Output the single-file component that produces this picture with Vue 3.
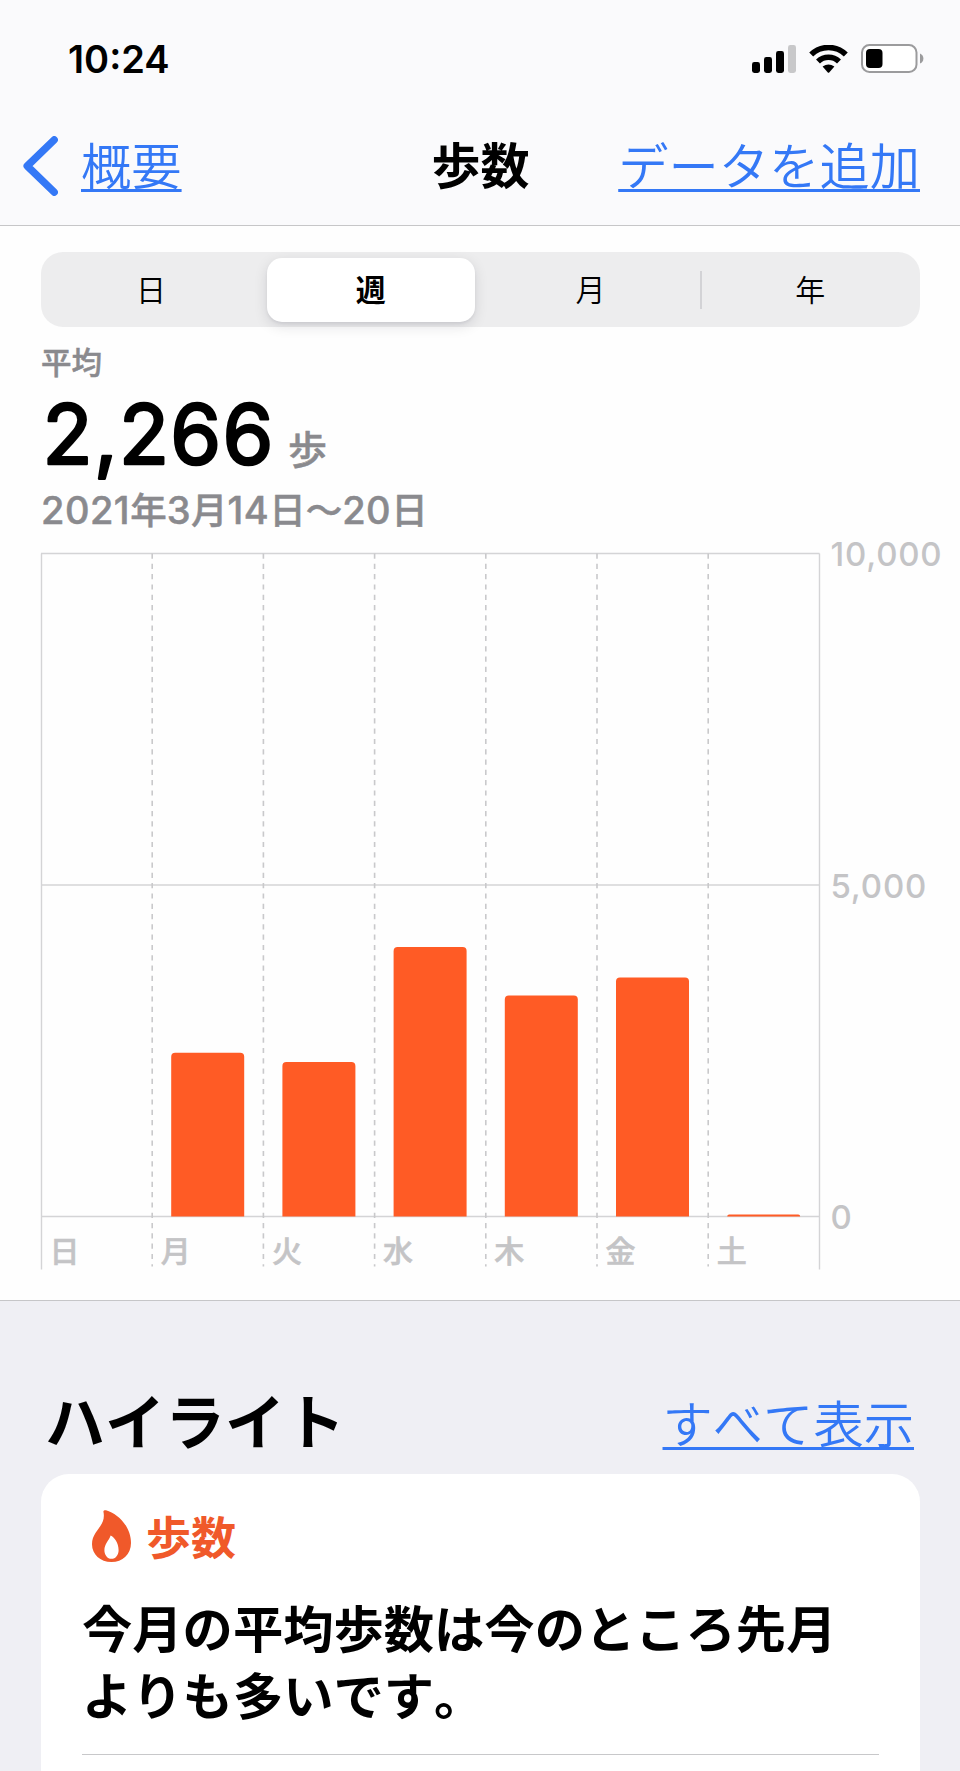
<template>
  <div class="page">
    <!-- ステータスバー -->
    <header class="top">
      <div class="status-bar">
        <span class="clock">10:24</span>
        <div class="status-icons">
          <svg class="icon-signal" viewBox="0 0 44 28">
            <rect x="0" y="17" width="8" height="11" rx="2.4" />
            <rect x="12" y="12" width="8" height="16" rx="2.4" />
            <rect x="24" y="6" width="8" height="22" rx="2.4" />
            <rect x="36" y="0" width="8" height="28" rx="2.4" class="weak" />
          </svg>
          <svg class="icon-wifi" viewBox="0 0 39 28">
            <path d="M2.2 9.6 A24.6 24.6 0 0 1 36.8 9.6" />
            <path d="M9 16.6 A15 15 0 0 1 30 16.6" />
            <path class="dot" d="M13.6 21.6 Q19.5 17.2 25.4 21.6 L20.2 27.4 Q19.5 28 18.8 27.4 Z" />
          </svg>
          <svg class="icon-battery" viewBox="0 0 63 29">
            <rect x="1" y="1" width="54.5" height="27" rx="7.5" class="shell" />
            <rect x="5" y="5" width="16.5" height="19" rx="4" />
            <path d="M59 9.5 Q62.4 11 62.4 14.5 Q62.4 18 59 19.5 Z" class="cap" />
          </svg>
        </div>
      </div>

      <!-- ナビゲーション -->
      <nav class="nav-bar">
        <a class="nav-back">
          <svg class="chevron" viewBox="0 0 35 60">
            <path d="M31.2 3.8 L4.2 30 L31.2 56.2" />
          </svg>
          <span class="link">概要</span>
        </a>
        <h1 class="nav-title">歩数</h1>
        <a class="nav-add link">データを追加</a>
      </nav>
    </header>

    <main class="chart-section">
      <div class="segment">
        <button
          v-for="(label, i) in ranges"
          :key="label"
          class="segment-item"
          :class="{ active: selected === i, divided: i > 0 && selected !== i && selected !== i - 1 }"
          @click="selected = i"
        >
          {{ label }}
        </button>
      </div>

      <div class="summary">
        <div class="summary-label">平均</div>
        <div class="summary-value">
          <svg class="big-number" viewBox="0 0 234 90">
            <text x="1.5" y="67">2,266</text>
          </svg>
          <span class="unit">歩</span>
        </div>
        <div class="summary-date"><b>2021</b>年<b>3</b>月<b>14</b>日〜<b>20</b>日</div>
      </div>

      <!-- 棒グラフ -->
      <svg class="chart" viewBox="0 0 919 740">
        <g class="grid">
          <path :d="`M.5 ${plotTop}V${plotBottom + 53}`" />
          <path :d="`M${plotWidth} ${plotTop}V${plotBottom + 53}`" />
          <path v-for="tick in ticks" :key="tick" :d="`M0 ${yOf(tick)}H${plotWidth}`" />
        </g>
        <g class="dashes">
          <path v-for="i in 6" :key="i" :d="`M${i * step} ${plotTop}V${plotBottom + 50}`" />
        </g>
        <path v-for="day in bars" :key="day.label" class="bar" :d="barPath(day)" />
        <text v-for="tick in ticks" :key="tick" class="y-label" :x="plotWidth + 11" :y="yOf(tick) + 12.5">{{ tick.toLocaleString('en-US') }}</text>
        <text v-for="(day, i) in days" :key="day.label" class="x-label" :x="i * step + 8.5" y="722.5">{{ day.label }}</text>
      </svg>
    </main>

    <section class="highlights">
      <div class="section-head">
        <h2>ハイライト</h2>
        <a class="link">すべて表示</a>
      </div>
      <article class="card">
        <div class="card-head">
          <svg class="flame" viewBox="0 0 39 52">
            <path
              fill-rule="evenodd"
              d="M11.4 1.6 C11.4 .4 12.8 0 14 .2 C26 3.6 39 16.5 39 33 C39 44.5 30.5 52 19.5 52 C8.3 52 0 44.4 0 34.2 C0 20 14.6 16.5 11.4 1.6 Z M18.6 25.6 C17.2 30.4 12.4 34 12.4 40.2 C12.4 45 15.4 48.8 19.5 48.8 C23.6 48.8 26.6 45 26.6 40.2 C26.6 33 22.4 27.4 18.6 25.6 Z"
            />
          </svg>
          <span>歩数</span>
        </div>
        <p class="card-text">今月の平均歩数は今のところ先月よりも多いです。</p>
        <hr class="card-line" />
      </article>
    </section>
  </div>
</template>

<script setup>
import { ref, computed } from 'vue'

const ranges = ['日', '週', '月', '年']
const selected = ref(1)

const days = [
  { label: '日', steps: 0 },
  { label: '月', steps: 2470 },
  { label: '火', steps: 2330 },
  { label: '水', steps: 4065 },
  { label: '木', steps: 3333 },
  { label: '金', steps: 3605 },
  { label: '土', steps: 30 }
]
const ticks = [10000, 5000, 0]

// グラフの寸法
const plotTop = 14.5
const plotBottom = 677.5
const plotWidth = 778.5
const step = 111.2
const barWidth = 73

const bars = computed(() => days.map((d, i) => ({ ...d, index: i })).filter(d => d.steps > 0))

function yOf(value) {
  return plotBottom - (value / 10000) * (plotBottom - plotTop)
}

// 上の角だけ丸い棒
function barPath(day) {
  const x = day.index * step + 19
  const y = yOf(day.steps)
  const r = Math.min(4, plotBottom - y)
  return `M${x} ${plotBottom}V${y + r}q0 ${-r} ${r} ${-r}h${barWidth - r * 2}q${r} 0 ${r} ${r}V${plotBottom}Z`
}
</script>

<style>
body {
  margin: 0;
  background: #efeff4;
}
</style>

<style scoped>
.page {
  width: 960px;
  height: 1771px;
  overflow: hidden;
  background: #efeff4;
  color: #000;
  font-family: Inter, "Noto Sans CJK JP", sans-serif;
}

.top {
  box-sizing: border-box;
  height: 226px;
  background: #fafafc;
  border-bottom: 1px solid #c6c6c8;
}

.status-bar {
  display: flex;
  justify-content: space-between;
  align-items: center;
  height: 117px;
  padding: 0 36px 0 68px;
}

.clock {
  font-size: 38px;
  font-weight: 600;
}

.status-icons {
  display: flex;
  align-items: center;
  gap: 13px;
}

.icon-signal {
  width: 44px;
  height: 28px;
}

.icon-signal .weak {
  fill: #c8c8ca;
}

.icon-wifi {
  width: 39px;
  height: 28px;
}

.icon-wifi path {
  fill: none;
  stroke: #000;
  stroke-width: 5.6;
}

.icon-wifi .dot {
  fill: #000;
  stroke: none;
}

.icon-battery {
  width: 63px;
  height: 29px;
}

.icon-battery .shell {
  fill: #fff;
  stroke: #9b9b9d;
  stroke-width: 2;
}

.icon-battery .cap {
  fill: #9b9b9d;
}

.nav-bar {
  display: grid;
  grid-template-columns: 1fr auto 1fr;
  align-items: center;
  height: 97px;
  padding: 0 40px 0 23px;
}

.nav-back {
  display: flex;
  align-items: center;
  gap: 23px;
}

.chevron {
  width: 35px;
  height: 60px;
}

.chevron path {
  fill: none;
  stroke: #3478f6;
  stroke-width: 7.4;
  stroke-linecap: round;
  stroke-linejoin: round;
}

.link {
  color: #3478f6;
  font-family: "Noto Sans CJK JP", sans-serif;
  font-size: 50.3px;
  font-weight: 350;
  font-kerning: none;
  line-height: 60px;
  text-decoration: underline;
  text-decoration-thickness: 2.5px;
  text-decoration-skip-ink: none;
  text-underline-offset: 4px;
  white-space: nowrap;
}

.nav-bar .link {
  padding-bottom: 6px;
}

.nav-title {
  margin: 0;
  padding: 0 0 5px 18px;
  font-family: "Noto Sans CJK JP", sans-serif;
  font-size: 49px;
  font-weight: 700;
  line-height: 60px;
}

.nav-add {
  justify-self: end;
}

.chart-section {
  box-sizing: border-box;
  height: 1075px;
  padding: 26px 0 0 41px;
  background: #fefefe;
  border-bottom: 1px solid #c6c6c8;
}

.segment {
  box-sizing: border-box;
  display: grid;
  grid-template-columns: repeat(4, 1fr);
  width: 879px;
  height: 75px;
  padding: 6px 0 5px;
  border-radius: 22px;
  background: #ededee;
}

.segment-item {
  position: relative;
  margin: 0 6px;
  padding: 0 0 4px;
  border: none;
  border-radius: 15px;
  background: none;
  color: #000;
  font-family: "Noto Sans CJK JP", sans-serif;
  font-size: 30px;
  font-weight: 350;
  line-height: 60px;
}

.segment-item.active {
  background: #fff;
  font-weight: 700;
  box-shadow: 0 4px 14px rgba(0, 0, 30, 0.12), 0 2px 3px rgba(0, 0, 30, 0.06);
}

.segment-item.divided::before {
  content: '';
  position: absolute;
  left: -6px;
  top: 13px;
  width: 2px;
  height: 38px;
  background: #d3d3d6;
}

.summary {
  height: 212px;
  color: #8a8a8e;
  font-weight: 500;
  -webkit-text-stroke: 0.5px #8a8a8e;
}

.summary-label {
  padding-top: 14px;
  font-size: 30.5px;
  line-height: 44px;
}

.summary-value {
  display: flex;
  align-items: flex-start;
  gap: 13px;
  height: 97px;
}

.big-number {
  width: 234px;
  height: 90px;
  margin-top: 12px;
  overflow: visible;
}

/* 丸ゴシック風に見せるため、線端を丸くした縁取りを重ねる */
.big-number text {
  font-size: 82px;
  font-weight: 400;
  letter-spacing: 1.4px;
  fill: #000;
  stroke: #000;
  stroke-width: 2.6;
  stroke-linejoin: round;
  -webkit-text-stroke: 2.6px #000;
}

.unit {
  padding-top: 35px;
  font-size: 39px;
  line-height: 60px;
}

.summary-date {
  font-size: 36.5px;
  line-height: 56px;
  white-space: nowrap;
}

.summary-date b {
  font-size: 38px;
  font-weight: 500;
  letter-spacing: 0.5px;
}

.chart {
  display: block;
  width: 919px;
  height: 740px;
  overflow: visible;
}

.grid path {
  fill: none;
  stroke: #d4d4d6;
  stroke-width: 1.4;
}

.dashes path {
  fill: none;
  stroke: #c9c9cb;
  stroke-width: 1.6;
  stroke-dasharray: 5.2 5.1;
}

.bar {
  fill: #ff5b25;
}

.y-label {
  fill: #c4c4c6;
  font-size: 33px;
  font-weight: 500;
  letter-spacing: 0.8px;
}

.x-label {
  fill: #c4c4c6;
  stroke: #c4c4c6;
  stroke-width: 0.6;
  font-family: "Noto Sans CJK JP", sans-serif;
  font-size: 30px;
  font-weight: 500;
}

.highlights {
  padding: 0 40px 0 41px;
}

.section-head {
  display: flex;
  justify-content: space-between;
  align-items: flex-start;
  height: 173px;
  padding-right: 6px;
}

.section-head h2 {
  margin: 0;
  padding: 78px 0 0 4px;
  font-family: "Noto Sans CJK JP", sans-serif;
  font-size: 60px;
  font-weight: 700;
  font-kerning: none;
  line-height: 80px;
}

.section-head .link {
  padding-top: 90px;
}

.card {
  height: 330px;
  padding: 36px 41px 0;
  border-radius: 28px;
  background: #fff;
}

.card-head {
  display: flex;
  align-items: center;
  gap: 15px;
  height: 52px;
  padding-left: 10px;
  color: #f0592a;
  font-family: "Noto Sans CJK JP", sans-serif;
  font-size: 45px;
  font-weight: 700;
  line-height: 52px;
}

.flame {
  width: 39px;
  height: 52px;
  fill: currentColor;
}

.card-text {
  margin: 31px 0 0;
  font-family: "Noto Sans CJK JP", sans-serif;
  font-size: 50.3px;
  font-weight: 700;
  font-kerning: none;
  line-height: 67px;
}

.card-line {
  height: 1px;
  margin: 27px 0 0;
  border: none;
  background: #c8c8ca;
}
</style>
